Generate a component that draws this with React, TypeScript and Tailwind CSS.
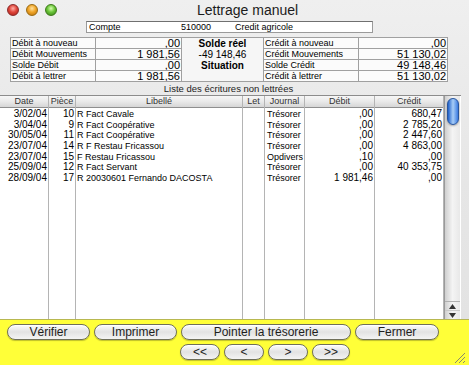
import React from "react";

const rows = [
  ["3/02/04", "10", "R Fact Cavale", "", "Trésorer", ",00", "680,47"],
  ["3/04/04", "9", "R Fact Coopérative", "", "Trésorer", ",00", "2 785,20"],
  ["30/05/04", "11", "R Fact Coopérative", "", "Trésorer", ",00", "2 447,60"],
  ["23/07/04", "14", "R F Restau Fricassou", "", "Trésorer", ",00", "4 863,00"],
  ["23/07/04", "15", "F Restau Fricassou", "", "Opdivers", ",10", ",00"],
  ["25/09/04", "12", "R Fact Servant", "", "Trésorer", ",00", "40 353,75"],
  ["28/09/04", "17", "R 20030601 Fernando DACOSTA", "", "Trésorer", "1 981,46", ",00"],
];

const cols = [
  { h: "Date", w: "w-[49px]", cell: "text-right pr-[1px] text-[10px]" },
  { h: "Pièce", w: "w-[27px]", cell: "text-right pr-[1px] text-[10px]" },
  { h: "Libellé", w: "w-[167px]", cell: "text-left pl-[1px] text-[9px]" },
  { h: "Let", w: "w-[22px]", cell: "text-left pl-[1px] text-[9px]" },
  { h: "Journal", w: "w-[40px]", cell: "text-left pl-[2px] text-[9px]" },
  { h: "Débit", w: "w-[70px]", cell: "text-right pr-[1px] text-[10px]" },
  { h: "Crédit", w: "w-[69px]", cell: "text-right pr-[1px] text-[10px]" },
];

function Btn({ label, w }: { label: string; w: string }) {
  return (
    <div
      className={`${w} h-[16px] rounded-full border border-[#6f6f5a] bg-linear-to-b from-[#fdfdfd] via-[#e2e2e2] to-[#f4f4f4] shadow-[inset_0_1px_1px_rgba(255,255,255,0.9),0_1px_1px_rgba(0,0,0,0.25)] flex items-center justify-center text-[12px] leading-none text-[#1e1e1e]`}
    >
      {label}
    </div>
  );
}

export default function App() {
  const sumCell = "h-[11px] border-r border-b border-[#a0a0a0] bg-[#fbfbfb] flex items-center overflow-hidden";
  return (
    <div className="w-[469px] h-[365px] overflow-hidden flex flex-col bg-linear-to-b from-[#efefef] via-[#e6e6e6] to-[#e2e2e2] font-['Liberation_Sans',Arial,sans-serif] text-black">
      {/* title bar */}
      <div className="h-[20px] shrink-0 flex items-center pl-[7px]">
        <div className="flex gap-[7px]">
          <div className="w-[12px] h-[12px] rounded-full border border-[#8a2a2a] bg-[radial-gradient(circle_at_50%_35%,#ffb0a8_0%,#e0473c_45%,#a81c14_100%)]" />
          <div className="w-[12px] h-[12px] rounded-full border border-[#9a6a10] bg-[radial-gradient(circle_at_50%_35%,#ffe2a0_0%,#f0a528_45%,#b8700a_100%)]" />
          <div className="w-[12px] h-[12px] rounded-full border border-[#3d7a1a] bg-[radial-gradient(circle_at_50%_35%,#d8ffb0_0%,#6cc63a_45%,#357f14_100%)]" />
        </div>
        <div className="ml-[140px] text-[14px] leading-none text-[#1c1c1c]">Lettrage manuel</div>
      </div>

      {/* compte row */}
      <div className="h-[12px] shrink-0 mt-[1px] pl-[86px]">
        <div className="w-[287px] h-[12px] bg-white border border-[#9a9a9a] border-t-[#707070] flex items-center text-[9px] leading-none">
          <div className="w-[82px] pl-[2px]">Compte</div>
          <div className="w-[42px] text-right">510000</div>
          <div className="pl-[24px]">Credit agricole</div>
        </div>
      </div>

      {/* summary */}
      <div className="mt-[4px] ml-[10px] shrink-0 w-[438px] border-l border-t border-[#a0a0a0] grid grid-cols-[85px_86px_82px_95px_89px] text-[9px] leading-none">
        <div className={`${sumCell} pl-[1px]`}>Débit à nouveau</div>
        <div className={`${sumCell} justify-end pr-[1px] text-[11px]`}>,00</div>
        <div className="h-[11px] border-r border-[#a0a0a0] bg-[#f6f6f6] flex items-center justify-center font-bold text-[10px]">Solde réel</div>
        <div className={`${sumCell} pl-[1px]`}>Crédit à nouveau</div>
        <div className={`${sumCell} justify-end pr-[1px] text-[11px]`}>,00</div>

        <div className={`${sumCell} pl-[1px]`}>Débit Mouvements</div>
        <div className={`${sumCell} justify-end pr-[1px] text-[11px]`}>1 981,56</div>
        <div className="h-[11px] border-r border-[#a0a0a0] bg-[#f6f6f6] flex items-center justify-center text-[10px]">-49 148,46</div>
        <div className={`${sumCell} pl-[1px]`}>Crédit Mouvements</div>
        <div className={`${sumCell} justify-end pr-[1px] text-[11px]`}>51 130,02</div>

        <div className={`${sumCell} pl-[1px]`}>Solde Débit</div>
        <div className={`${sumCell} justify-end pr-[1px] text-[11px]`}>,00</div>
        <div className="h-[11px] border-r border-[#a0a0a0] bg-[#f6f6f6] flex items-center justify-center font-bold text-[10px]">Situation</div>
        <div className={`${sumCell} pl-[1px]`}>Solde Crédit</div>
        <div className={`${sumCell} justify-end pr-[1px] text-[11px]`}>49 148,46</div>

        <div className={`${sumCell} pl-[1px]`}>Débit à lettrer</div>
        <div className={`${sumCell} justify-end pr-[1px] text-[11px]`}>1 981,56</div>
        <div className="h-[11px] border-r border-b border-[#a0a0a0] bg-[#f6f6f6]" />
        <div className={`${sumCell} pl-[1px]`}>Crédit à lettrer</div>
        <div className={`${sumCell} justify-end pr-[1px] text-[11px]`}>51 130,02</div>
      </div>

      {/* list title */}
      <div className="h-[13px] shrink-0 flex items-center justify-center pr-[12px] text-[9.5px] leading-none text-[#222]">
        Liste des écritures non lettrées
      </div>

      {/* list */}
      <div className="h-[224px] shrink-0 w-[461px] flex bg-white border-t border-[#8c8c8c]">
        {cols.map((c, ci) => (
          <div key={ci} className={`${c.w} shrink-0 flex flex-col border-r border-[#b4b4b4]`}>
            <div className="h-[12px] shrink-0 bg-linear-to-b from-[#f7f7f7] via-[#e9e9e9] to-[#d6d6d6] border-b border-[#8e8e8e] flex items-center justify-center text-[9px] leading-none text-[#333]">
              {c.h}
            </div>
            <div className="pt-[1px] flex flex-col">
              {rows.map((r, ri) => (
                <div key={ri} className={`h-[10.67px] leading-[10.67px] whitespace-nowrap overflow-hidden ${c.cell}`}>
                  {r[ci]}
                </div>
              ))}
            </div>
          </div>
        ))}
        {/* scrollbar */}
        <div className="w-[16px] shrink-0 flex flex-col bg-linear-to-r from-[#cfcfcf] via-[#f4f4f4] to-[#e8e8e8] border-l border-[#9a9a9a]">
          <div className="flex-1 pt-[2px] flex flex-col items-center">
            <div className="w-[12px] h-[27px] rounded-full border border-[#27549c] bg-linear-to-r from-[#1d5fc8] via-[#a8cdf6] to-[#3b7be0] shadow-[0_1px_2px_rgba(0,0,0,0.3)]" />
          </div>
          <div className="h-[9px] flex items-center justify-center border-t border-[#b0b0b0]">
            <svg width="7" height="5" viewBox="0 0 7 5"><polygon points="3.5,0 7,5 0,5" fill="#333" /></svg>
          </div>
          <div className="h-[9px] flex items-center justify-center border-t border-[#c8c8c8]">
            <svg width="7" height="5" viewBox="0 0 7 5"><polygon points="0,0 7,0 3.5,5" fill="#333" /></svg>
          </div>
        </div>
      </div>

      {/* yellow bottom */}
      <div className="relative flex-1 bg-[#ffff38] border-t border-[#b8b850] flex flex-col pt-[4px] gap-[4px]">
        <div className="flex pl-[7px] gap-[4px]">
          <Btn label="Vérifier" w="w-[83px]" />
          <Btn label="Imprimer" w="w-[83px]" />
          <Btn label="Pointer la trésorerie" w="w-[170px]" />
          <Btn label="Fermer" w="w-[84px]" />
        </div>
        <div className="flex pl-[180px] gap-[4px]">
          <Btn label="<<" w="w-[40px]" />
          <Btn label="<" w="w-[40px]" />
          <Btn label=">" w="w-[40px]" />
          <Btn label=">>" w="w-[38px]" />
        </div>
        <svg className="absolute right-[3px] bottom-[1px]" width="12" height="12" viewBox="0 0 12 12">
          <line x1="11" y1="1" x2="1" y2="11" stroke="#8a8a6a" strokeWidth="1" />
          <line x1="11" y1="5" x2="5" y2="11" stroke="#8a8a6a" strokeWidth="1" />
          <line x1="11" y1="9" x2="9" y2="11" stroke="#8a8a6a" strokeWidth="1" />
        </svg>
      </div>
    </div>
  );
}
